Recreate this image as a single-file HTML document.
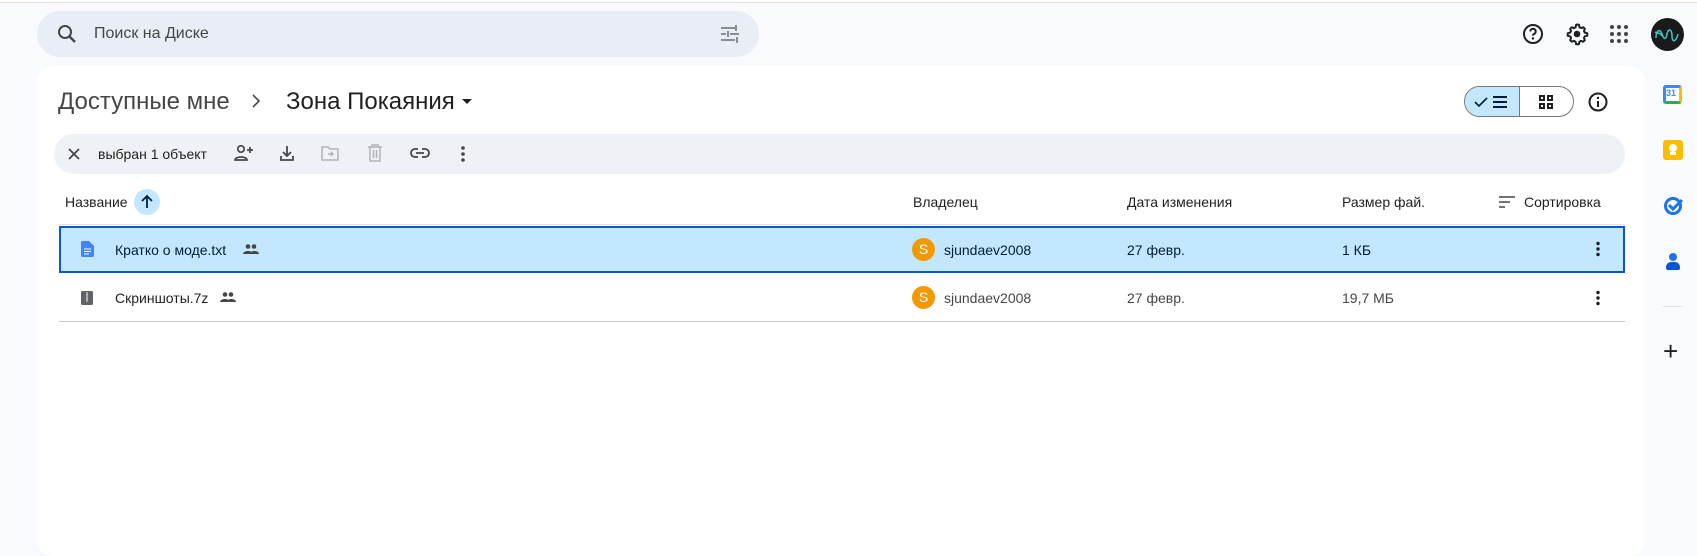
<!DOCTYPE html>
<html><head><meta charset="utf-8"><style>
*{margin:0;padding:0;box-sizing:border-box}
body{width:1697px;height:536px;overflow:hidden;background:#f8fafd;font-family:"Liberation Sans",sans-serif;color:#1f1f1f;position:relative}
.a{position:absolute}
.topline{left:0;top:0;width:1697px;height:3px;border-bottom:1px solid #e3e3e3;background:#fff}
.search{left:37px;top:11px;width:722px;height:46px;border-radius:23px;background:#e9eef6}
.panel{left:37px;top:66px;width:1608px;height:490px;background:#fff;border-radius:16px}
.t{white-space:nowrap}
svg{position:absolute}
.toolbar{left:54px;top:134px;width:1571px;height:40px;border-radius:20px;background:#eef1f6}
.row1{left:59px;top:226px;width:1566px;height:47px;background:#c2e7ff;border:2px solid #0b57d0}
.line{left:59px;top:321px;width:1566px;height:1px;background:#c7c7c7}
.av{width:23px;height:23px;border-radius:50%;background:#f29900;color:#fff;font-size:14px;text-align:center;line-height:23px}
.f14{font-size:14px}
</style></head><body>
<div class="a topline"></div>
<div class="a search"></div>
<svg style="left:55px;top:22px" width="24" height="24" viewBox="0 0 24 24"><circle cx="10" cy="10" r="6" fill="none" stroke="#444746" stroke-width="2"/><path d="M14.5 14.5L20 20" stroke="#444746" stroke-width="2.4"/></svg>
<div class="a t" style="left:94px;top:25px;font-size:16px;color:#444746">Поиск на Диске</div>
<svg style="left:719px;top:24px" width="22" height="20" viewBox="0 0 22 20"><path d="M2 4h14M2 10h5M11 10h9M2 16h14M17 1v6M9 7v6M18 13v6" stroke="#8a8d90" stroke-width="2"/></svg>
<svg style="left:1521px;top:22px" width="24" height="24" viewBox="0 0 24 24"><circle cx="12" cy="12" r="9" fill="none" stroke="#1f1f1f" stroke-width="2"/><path d="M9.3 9.5a2.7 2.7 0 1 1 3.6 2.5c-.7.3-.9.8-.9 1.6" fill="none" stroke="#1f1f1f" stroke-width="2"/><circle cx="12" cy="16.5" r="1.2" fill="#1f1f1f"/></svg>
<svg style="left:1565px;top:22px" width="24" height="24" viewBox="0 0 24 24"><path d="M12 2.5l2 .3.5 2.4 1.6.9 2.3-.8 1.4 1.5-.8 2.3.9 1.6 2.4.5v2.6l-2.4.5-.9 1.6.8 2.3-1.5 1.5-2.3-.8-1.6.9-.5 2.4h-2.8l-.5-2.4-1.6-.9-2.3.8-1.5-1.5.8-2.3-.9-1.6-2.4-.5v-2.6l2.4-.5.9-1.6-.8-2.3 1.5-1.5 2.3.8 1.6-.9.5-2.4z" fill="none" stroke="#1f1f1f" stroke-width="2" stroke-linejoin="round"/><circle cx="12" cy="12" r="3.3" fill="#1f1f1f"/></svg>
<svg style="left:1609px;top:24px" width="20" height="20" viewBox="0 0 20 20" fill="#444746"><circle cx="3" cy="3" r="2"/><circle cx="10" cy="3" r="2"/><circle cx="17" cy="3" r="2"/><circle cx="3" cy="10" r="2"/><circle cx="10" cy="10" r="2"/><circle cx="17" cy="10" r="2"/><circle cx="3" cy="17" r="2"/><circle cx="10" cy="17" r="2"/><circle cx="17" cy="17" r="2"/></svg>
<div class="a" style="left:1651px;top:18px;width:33px;height:33px;border-radius:50%;background:#1a1a1a"></div>
<svg style="left:1653px;top:24px" width="29" height="20" viewBox="0 0 29 20"><path d="M3 14c0-8 4-10 6-4s4 6 5 0 5-5 5 2 4 6 6-2M2 8c3 2 5 0 7 4" fill="none" stroke="#3cc9c9" stroke-width="1.5"/></svg>
<div class="a" style="left:1663px;top:85px;width:19px;height:19px;border-radius:3px;background:#fff;border:3px solid #4285f4;border-bottom-color:#34a853;border-right-color:#fbbc04"></div>
<div class="a t" style="left:1666px;top:88px;font-size:9px;color:#4285f4;font-weight:bold">31</div>
<div class="a" style="left:1663px;top:140px;width:20px;height:20px;border-radius:3px;background:#fbbc04"></div>
<div class="a" style="left:1669px;top:144px;width:8px;height:8px;border-radius:50%;background:#fff"></div>
<div class="a" style="left:1670px;top:152px;width:6px;height:3px;background:#fff"></div>
<svg style="left:1663px;top:195px" width="21" height="21" viewBox="0 0 21 21"><circle cx="10" cy="11" r="7.5" fill="none" stroke="#1a73e8" stroke-width="3"/><path d="M6 10l4 4 9-9" fill="none" stroke="#1a73e8" stroke-width="3"/></svg>
<div class="a" style="left:1669px;top:253px;width:8px;height:8px;border-radius:50%;background:#1a73e8"></div>
<div class="a" style="left:1666px;top:262px;width:14px;height:8px;border-radius:5px 5px 2px 2px;background:#0b57d0"></div>
<div class="a" style="left:1663px;top:306px;width:20px;height:1px;background:#e3e3e3"></div>
<div class="a t" style="left:1663px;top:336px;font-size:26px;color:#1f1f1f;font-weight:300">+</div>

<div class="a panel"></div>
<div class="a t" style="left:58px;top:88px;font-size:24px;color:#444746">Доступные мне</div>
<svg style="left:250px;top:93px" width="12" height="16" viewBox="0 0 12 16"><path d="M3 2l6 6-6 6" fill="none" stroke="#444746" stroke-width="1.6"/></svg>
<div class="a t" style="left:286px;top:88px;font-size:24px;color:#1f1f1f">Зона Покаяния</div>
<svg style="left:461px;top:98px" width="12" height="8"><path d="M1 1h10L6 6z" fill="#1f1f1f"/></svg>
<div class="a" style="left:1464px;top:86px;width:110px;height:31px;border:1px solid #747775;border-radius:16px;overflow:hidden;background:#fff"><div style="width:55px;height:100%;background:#c2e7ff;border-right:1px solid #747775"></div></div>
<svg style="left:1474px;top:94px" width="36" height="16" viewBox="0 0 36 16"><path d="M1 8l4 4 8-8" fill="none" stroke="#001d35" stroke-width="1.6"/><path d="M19 3h14M19 8h14M19 13h14" stroke="#001d35" stroke-width="2"/></svg>
<svg style="left:1538px;top:94px" width="16" height="16" viewBox="0 0 16 16" fill="none" stroke="#1f1f1f" stroke-width="2"><rect x="2" y="2" width="4" height="4"/><rect x="10" y="2" width="4" height="4"/><rect x="2" y="10" width="4" height="4"/><rect x="10" y="10" width="4" height="4"/></svg>
<svg style="left:1587px;top:91px" width="22" height="22" viewBox="0 0 22 22"><circle cx="11" cy="11" r="8.5" fill="none" stroke="#1f1f1f" stroke-width="2"/><path d="M11 10v6" stroke="#1f1f1f" stroke-width="2"/><circle cx="11" cy="7" r="1.2" fill="#1f1f1f"/></svg>
<div class="a toolbar"></div>
<svg style="left:67px;top:147px" width="14" height="14"><path d="M2 2l10 10M12 2L2 12" stroke="#444746" stroke-width="1.8"/></svg>
<div class="a t f14" style="left:98px;top:146px;color:#1f1f1f">выбран 1 объект</div>
<svg style="left:233px;top:144px" width="22" height="18" viewBox="0 0 22 18" fill="none" stroke="#444746" stroke-width="1.7"><circle cx="8" cy="5" r="3.2"/><path d="M2 16c0-4 12-4 12 0zM17 3v6M14 6h6"/></svg>
<svg style="left:278px;top:144px" width="18" height="18" viewBox="0 0 18 18" fill="none" stroke="#444746" stroke-width="1.8"><path d="M9 2v10M5 8l4 4 4-4M3 12v4h12v-4"/></svg>
<svg style="left:321px;top:145px" width="18" height="16" viewBox="0 0 18 16" fill="none" stroke="#b0b3b6" stroke-width="1.5"><path d="M1 2h6l2 2h8v11H1z"/><path d="M7 9h5M10 7l2 2-2 2"/></svg>
<svg style="left:367px;top:144px" width="16" height="18" viewBox="0 0 16 18" fill="none" stroke="#b0b3b6" stroke-width="1.5"><path d="M1 3h14M5 3V1h6v2M3 3v14h10V3M6.5 6v8M9.5 6v8"/></svg>
<svg style="left:409px;top:147px" width="22" height="12" viewBox="0 0 22 12" fill="none" stroke="#444746" stroke-width="1.8"><path d="M9 2H6a4 4 0 0 0 0 8h3M13 2h3a4 4 0 0 1 0 8h-3M7 6h8"/></svg>
<svg style="left:460px;top:145px" width="6" height="18"><circle cx="3" cy="3" r="1.8" fill="#444746"/><circle cx="3" cy="9" r="1.8" fill="#444746"/><circle cx="3" cy="15" r="1.8" fill="#444746"/></svg>
<div class="a t f14" style="left:65px;top:194px;color:#1f1f1f">Название</div>
<div class="a" style="left:134px;top:189px;width:26px;height:26px;border-radius:50%;background:#c2e7ff"></div>
<svg style="left:139px;top:194px" width="16" height="16"><path d="M8 14V2M3 7l5-5 5 5" fill="none" stroke="#001d35" stroke-width="1.8"/></svg>
<div class="a t f14" style="left:913px;top:194px;color:#1f1f1f">Владелец</div>
<div class="a t f14" style="left:1127px;top:194px;color:#1f1f1f">Дата изменения</div>
<div class="a t f14" style="left:1342px;top:194px;color:#1f1f1f">Размер фай.</div>
<svg style="left:1499px;top:196px" width="16" height="12"><path d="M0 1h16M0 6h11M0 11h6" stroke="#444746" stroke-width="1.6"/></svg>
<div class="a t f14" style="left:1524px;top:194px;color:#1f1f1f">Сортировка</div>
<div class="a" style="left:59px;top:224px;width:1566px;height:1px;background:#e3e3e3"></div>
<div class="a row1"></div>
<svg style="left:81px;top:241px" width="13" height="16" viewBox="0 0 13 16"><path d="M0 1.5A1.5 1.5 0 0 1 1.5 0H8l5 5v9.5a1.5 1.5 0 0 1-1.5 1.5h-10A1.5 1.5 0 0 1 0 14.5z" fill="#4285f4"/><path d="M3 8h7M3 10.5h7M3 13h5" stroke="#fff" stroke-width="1.1"/></svg>
<div class="a t f14" style="left:115px;top:242px;color:#001d35">Кратко о моде.txt</div>
<svg style="left:243px;top:244px" width="16" height="10" viewBox="0 0 16 10" fill="#444746"><circle cx="5" cy="2.5" r="2.3"/><circle cx="11" cy="2.5" r="2.3"/><path d="M0 10c0-4 10-4 10 0zM8 10c0-2 1-3 3-3 3 0 5 1 5 3z"/></svg>
<div class="a av" style="left:912px;top:238px">S</div>
<div class="a t f14" style="left:944px;top:242px;color:#001d35">sjundaev2008</div>
<div class="a t f14" style="left:1127px;top:242px;color:#001d35">27 февр.</div>
<div class="a t f14" style="left:1342px;top:242px;color:#001d35">1 КБ</div>
<svg style="left:1595px;top:241px" width="6" height="16"><circle cx="3" cy="2.5" r="1.7" fill="#1f1f1f"/><circle cx="3" cy="8" r="1.7" fill="#1f1f1f"/><circle cx="3" cy="13.5" r="1.7" fill="#1f1f1f"/></svg>
<svg style="left:81px;top:291px" width="12" height="14" viewBox="0 0 12 14"><rect width="12" height="14" rx="1.5" fill="#5f6368"/><path d="M6 1v2M5 4h2M6 5v2M5 8h2M6 9v2" stroke="#fff" stroke-width="0.9"/></svg>
<div class="a t f14" style="left:115px;top:290px;color:#1f1f1f">Скриншоты.7z</div>
<svg style="left:220px;top:292px" width="16" height="10" viewBox="0 0 16 10" fill="#444746"><circle cx="5" cy="2.5" r="2.3"/><circle cx="11" cy="2.5" r="2.3"/><path d="M0 10c0-4 10-4 10 0zM8 10c0-2 1-3 3-3 3 0 5 1 5 3z"/></svg>
<div class="a av" style="left:912px;top:286px">S</div>
<div class="a t f14" style="left:944px;top:290px;color:#444746">sjundaev2008</div>
<div class="a t f14" style="left:1127px;top:290px;color:#444746">27 февр.</div>
<div class="a t f14" style="left:1342px;top:290px;color:#444746">19,7 МБ</div>
<svg style="left:1595px;top:290px" width="6" height="16"><circle cx="3" cy="2.5" r="1.7" fill="#1f1f1f"/><circle cx="3" cy="8" r="1.7" fill="#1f1f1f"/><circle cx="3" cy="13.5" r="1.7" fill="#1f1f1f"/></svg>
<div class="a line"></div>
</body></html>
